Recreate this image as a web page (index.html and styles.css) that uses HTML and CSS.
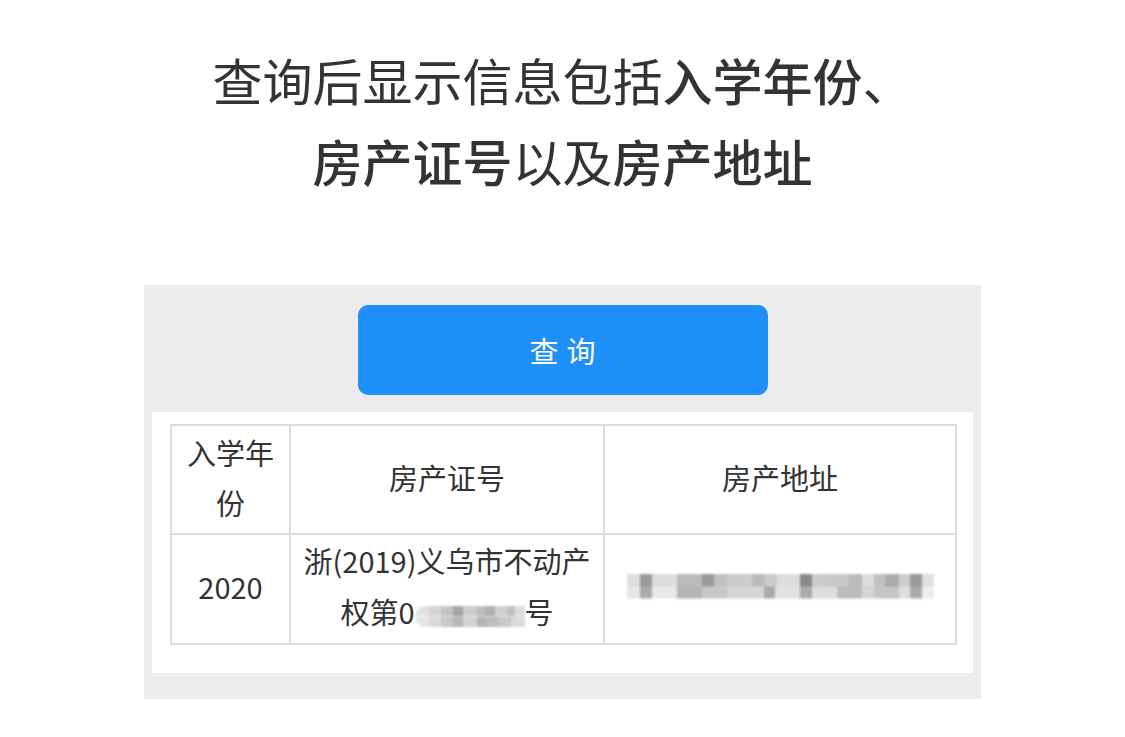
FILE: index.html
```html
<!DOCTYPE html>
<html lang="zh-CN">
<head>
    <meta charset="UTF-8">
    <title>入学查询</title>
    <link rel="stylesheet" href="styles.css">
</head>
<body>
    <div class="caption">
        <p>查询后显示信息包括<b>入学年份</b>、</p>
        <p><b>房产证号</b>以及<b>房产地址</b></p>
    </div>
    <div class="panel">
        <button class="query-btn">查询</button>
        <div class="card">
            <table class="result">
                <thead>
                    <tr>
                        <th class="col-year">入学年<br>份</th>
                        <th class="col-cert">房产证号</th>
                        <th class="col-addr">房产地址</th>
                    </tr>
                </thead>
                <tbody>
                    <tr>
                        <td>2020</td>
                        <td>浙(2019)义乌市不动产<br>权第0<span class="mosaic mosaic-cert"></span>号</td>
                        <td><span class="mosaic mosaic-addr"></span></td>
                    </tr>
                </tbody>
            </table>
        </div>
    </div>
</body>
</html>
```

FILE: styles.css
```css
body {
    margin: 0;
    background: #fff;
    font-family: "Noto Sans CJK SC", "Noto Sans", sans-serif;
    color: #333;
}
.caption {
    padding-top: 39px;
    text-align: center;
    font-size: 50px;
    line-height: 81px;
    color: #333;
}
.caption p {
    margin: 0;
}
.caption b {
    font-weight: 500;
}
.panel {
    width: 837px;
    margin: 84px auto 0;
    box-sizing: border-box;
    background: #ececee;
    padding: 20px 8px 26px;
}
.query-btn {
    display: block;
    width: 410px;
    height: 90px;
    margin: 0 auto 17px;
    padding: 0 0 0 8px;
    border: none;
    border-radius: 10px;
    background: #1f8ff9;
    color: #fff;
    font-family: inherit;
    font-size: 29px;
    letter-spacing: 8px;
    cursor: pointer;
}
.card {
    background: #fff;
    padding: 12px 16px 28px 18px;
}
.result {
    width: 787px;
    border-collapse: collapse;
    font-size: 29px;
    color: #333;
}
.result th, .result td {
    border: 2px solid #dcdcdc;
    text-align: center;
    font-weight: normal;
    padding: 0 4px;
}
.result th {
    height: 101px;
    padding-bottom: 6px;
    line-height: 50px;
}
.result td {
    height: 102px;
    padding-bottom: 6px;
    line-height: 51px;
}
.col-year {
    width: 109px;
}
.col-cert {
    width: 304px;
}
.mosaic {
    display: inline-block;
    filter: blur(1.2px);
}
.mosaic-cert {
    width: 110px;
    height: 21px;
    vertical-align: -3px;
    border-radius: 10px 0 0 10px;
    background:
        linear-gradient(90deg, #e2e2e2 0 14px, #d4d4d4 14px 26px, #c4c4c4 26px 38px, #a4a4a4 38px 48px, #cdcdcd 48px 62px, #bdbdbd 62px 70px, #b0b0b0 70px 80px, #d0d0d0 80px 92px, #c0c0c0 92px 100px, #dcdcdc 100px 110px) top / 100% 50% no-repeat,
        linear-gradient(90deg, #e6e6e6 0 14px, #d8d8d8 14px 26px, #c8c8c8 26px 38px, #b6b6b6 38px 48px, #d2d2d2 48px 62px, #b4b4b4 62px 72px, #bebebe 72px 84px, #c8c8c8 84px 96px, #dadada 96px 110px) bottom / 100% 50% no-repeat;
}
.mosaic-addr {
    display: block;
    width: 307px;
    height: 25px;
    margin: 0 auto;
    background:
        linear-gradient(90deg, #ddd 0 13px, #999 13px 25px, #ddd 25px 50px, #bbb 50px 75px, #999 75px 87px, #c0c0c0 87px 100px, #ccc 100px 125px, #bbb 125px 138px, #ccc 138px 150px, #ddd 150px 173px, #888 173px 185px, #ccc 185px 198px, #c8c8c8 198px 222px, #bbb 222px 235px, #ddd 235px 247px, #c0c0c0 247px 258px, #aaa 258px 272px, #ccc 272px 283px, #999 283px 295px, #e0e0e0 295px 307px) top / 100% 50% no-repeat,
        linear-gradient(90deg, #e5e5e5 0 13px, #aaa 13px 25px, #e8e8e8 25px 50px, #b5b5b5 50px 75px, #c8c8c8 75px 100px, #d5d5d5 100px 137px, #aaa 137px 148px, #e0e0e0 148px 173px, #aaa 173px 185px, #ddd 185px 210px, #bbb 210px 235px, #d5d5d5 235px 247px, #c5c5c5 247px 272px, #ddd 272px 283px, #aaa 283px 295px, #eee 295px 307px) bottom / 100% 50% no-repeat;
}
```
